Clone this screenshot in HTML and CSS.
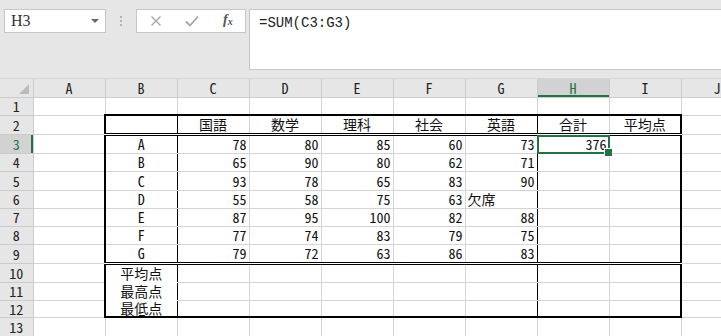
FILE: index.html
```html
<!DOCTYPE html>
<html lang="ja">
<head>
    <meta charset="UTF-8">
    <title>Sheet1</title>
    <link rel="stylesheet" href="styles.css">
</head>
<body>
    <div class="toolbar">
        <div class="namebox">
            <span class="ref">H3</span>
            <span class="caret"></span>
        </div>
        <div class="grip"><i></i><i></i><i></i></div>
        <div class="fxbox">
            <svg class="btn" width="12" height="12" viewBox="0 0 12 12">
                <path d="M1.5 1.5L10.5 10.5M10.5 1.5L1.5 10.5" stroke="#a6a6a6" stroke-width="1.4" fill="none"/>
            </svg>
            <svg class="btn" width="14" height="12" viewBox="0 0 14 12">
                <path d="M1 6.5L5 10.5L13 1.5" stroke="#a6a6a6" stroke-width="1.8" fill="none"/>
            </svg>
            <span class="fx">f<sub>x</sub></span>
        </div>
        <div class="formula">=SUM(C3:G3)</div>
    </div>

    <table class="sheet">
        <colgroup>
            <col class="rh">
            <col class="col"><col class="col"><col class="col"><col class="col"><col class="col">
            <col class="col"><col class="col"><col class="col"><col class="col"><col class="col">
        </colgroup>
        <tr class="colhead">
            <th class="corner"><span class="tri"></span></th>
            <th>A</th><th>B</th><th>C</th><th>D</th><th>E</th><th>F</th><th>G</th>
            <th class="selc">H</th><th>I</th><th>J</th>
        </tr>
        <tr class="h18">
            <th>1</th><td></td><td></td><td></td><td></td><td></td><td></td><td></td><td></td><td></td><td></td>
        </tr>
        <tr class="h19 r2">
            <th>2</th><td></td>
            <td class="t cb"></td>
            <td class="t c">国語</td><td class="t c">数学</td><td class="t c">理科</td><td class="t c">社会</td>
            <td class="t c cg">英語</td><td class="t c">合計</td><td class="t c ci">平均点</td>
            <td></td>
        </tr>
        <tr class="h19">
            <th class="selr">3</th><td></td>
            <td class="t c cb">A</td>
            <td class="t n">78</td><td class="t n">80</td><td class="t n">85</td><td class="t n">60</td>
            <td class="t n cg">73</td><td class="t n active">376</td><td class="t ci"></td>
            <td></td>
        </tr>
        <tr class="h18">
            <th>4</th><td></td>
            <td class="t c cb">B</td>
            <td class="t n">65</td><td class="t n">90</td><td class="t n">80</td><td class="t n">62</td>
            <td class="t n cg">71</td><td class="t"></td><td class="t ci"></td>
            <td></td>
        </tr>
        <tr class="h19">
            <th>5</th><td></td>
            <td class="t c cb">C</td>
            <td class="t n">93</td><td class="t n">78</td><td class="t n">65</td><td class="t n">83</td>
            <td class="t n cg">90</td><td class="t"></td><td class="t ci"></td>
            <td></td>
        </tr>
        <tr class="h18">
            <th>6</th><td></td>
            <td class="t c cb">D</td>
            <td class="t n">55</td><td class="t n">58</td><td class="t n">75</td><td class="t n">63</td>
            <td class="t cg">欠席</td><td class="t"></td><td class="t ci"></td>
            <td></td>
        </tr>
        <tr class="h18">
            <th>7</th><td></td>
            <td class="t c cb">E</td>
            <td class="t n">87</td><td class="t n">95</td><td class="t n">100</td><td class="t n">82</td>
            <td class="t n cg">88</td><td class="t"></td><td class="t ci"></td>
            <td></td>
        </tr>
        <tr class="h18">
            <th>8</th><td></td>
            <td class="t c cb">F</td>
            <td class="t n">77</td><td class="t n">74</td><td class="t n">83</td><td class="t n">79</td>
            <td class="t n cg">75</td><td class="t"></td><td class="t ci"></td>
            <td></td>
        </tr>
        <tr class="h19 r9">
            <th>9</th><td></td>
            <td class="t c cb">G</td>
            <td class="t n">79</td><td class="t n">72</td><td class="t n">63</td><td class="t n">86</td>
            <td class="t n cg">83</td><td class="t"></td><td class="t ci"></td>
            <td></td>
        </tr>
        <tr class="h19">
            <th>10</th><td></td>
            <td class="t c cb nob">平均点</td>
            <td class="t"></td><td class="t"></td><td class="t"></td><td class="t"></td>
            <td class="t cg"></td><td class="t"></td><td class="t ci"></td>
            <td></td>
        </tr>
        <tr class="h18">
            <th>11</th><td></td>
            <td class="t c cb nob">最高点</td>
            <td class="t"></td><td class="t"></td><td class="t"></td><td class="t"></td>
            <td class="t cg"></td><td class="t"></td><td class="t ci"></td>
            <td></td>
        </tr>
        <tr class="h17 r12">
            <th>12</th><td></td>
            <td class="t c cb">最低点</td>
            <td class="t"></td><td class="t"></td><td class="t"></td><td class="t"></td>
            <td class="t cg"></td><td class="t"></td><td class="t ci"></td>
            <td></td>
        </tr>
        <tr class="h19">
            <th>13</th><td></td><td></td><td></td><td></td><td></td><td></td><td></td><td></td><td></td><td></td>
        </tr>
    </table>
</body>
</html>
```

FILE: styles.css
```css
*{
    margin: 0;
    padding: 0;
    box-sizing: border-box;
}
html,body{
    width: 100%;
    height: 100%;
    overflow: hidden;
}
body{
    background-color: #e6e6e6;
    font-family: "Noto Sans Mono CJK JP", "Noto Sans CJK JP", monospace;
    font-size: 14px;
    color: #111;
}

/* formula bar */
.toolbar{
    display: flex;
    align-items: flex-start;
    height: 79px;
    padding: 9px 0 0 4px;
    border-bottom: 1px solid #d6d6d6;
}
.namebox{
    display: flex;
    align-items: center;
    justify-content: space-between;
    width: 102px;
    height: 24px;
    padding: 0 6px 0 6px;
    background-color: #fff;
    border: 1px solid #c6c6c6;
}
.namebox .ref{
    font-family: "Liberation Serif", serif;
    font-size: 16px;
    line-height: 18px;
    color: #333;
}
.namebox .caret{
    width: 0;
    height: 0;
    border-left: 4px solid transparent;
    border-right: 4px solid transparent;
    border-top: 4px solid #666;
}
.grip{
    display: flex;
    flex-direction: column;
    align-items: center;
    gap: 2px;
    width: 30px;
    padding-top: 7px;
}
.grip i{
    display: block;
    width: 2px;
    height: 2px;
    background-color: #b3b3b3;
}
.fxbox{
    display: flex;
    align-items: center;
    width: 110px;
    height: 24px;
    padding-left: 13px;
    background-color: #fff;
    border: 1px solid #c6c6c6;
}
.fxbox .btn{
    margin-right: 23px;
}
.fxbox .btn + .btn{
    margin-right: 24px;
}
.fx{
    font-family: "Liberation Serif", serif;
    font-style: italic;
    font-weight: bold;
    font-size: 14px;
    line-height: 16px;
    color: #555;
}
.fx sub{
    font-size: 10px;
    vertical-align: -1px;
}
.formula{
    flex: 1;
    height: 61px;
    margin-left: 3px;
    padding: 5px 9px;
    background-color: #fff;
    border: 1px solid #c6c6c6;
    border-right: none;
    font-family: "Liberation Mono", monospace;
    font-size: 14px;
    line-height: 16px;
    color: #222;
}

/* grid */
.sheet{
    table-layout: fixed;
    border-collapse: collapse;
    width: 753px;
    background-color: #fff;
}
.sheet .rh{
    width: 33px;
}
.sheet .col{
    width: 72px;
}
.sheet td{
    padding: 0 2px;
    border: 1px solid #d4d4d4;
    white-space: nowrap;
    overflow: visible;
    line-height: 14px;
}
.sheet th{
    font-weight: normal;
    background-color: #e6e6e6;
    border: 1px solid #cbcbcb;
    color: #222;
    line-height: 14px;
}
.colhead{
    height: 18px;
}
.colhead th{
    border-top: none;
}
.sheet tr > th:first-child{
    border-left: none;
}
.corner{
    position: relative;
}
.corner .tri{
    position: absolute;
    right: 4px;
    bottom: 3px;
    width: 0;
    height: 0;
    border-left: 10px solid transparent;
    border-bottom: 10px solid #bcbcbc;
}
.h17{ height: 17px; }
.h18{ height: 18px; }
.h19{ height: 19px; }

.c{ text-align: center; }
.n{ text-align: right; }

/* score table borders */
.r2 .t{
    border-top: 2px solid #000;
    border-bottom: 3px double #000;
}
.r9 .t{
    border-bottom: 3px double #000;
}
.r12 .t{
    border-bottom: 2px solid #000;
}
.sheet .t.cb{
    border-left: 2px solid #000;
    border-right: 1px solid #000;
}
.sheet .t.cg{
    border-right: 1px solid #000;
}
.sheet .t.ci{
    border-right: 2px solid #000;
}
.sheet .t.nob{
    border-bottom-color: #fff;
}

/* selection */
.sheet th.selc{
    background-color: #d2d2d2;
    color: #217346;
    box-shadow: inset 0 -2px #217346;
}
.sheet th.selr{
    background-color: #d2d2d2;
    color: #217346;
    box-shadow: inset -2px 0 #217346;
}
.active{
    position: relative;
}
.active::after{
    content: "";
    position: absolute;
    left: -1px;
    top: -1px;
    right: -1px;
    bottom: -1px;
    border: 2px solid #217346;
}
.active::before{
    content: "";
    position: absolute;
    right: -4px;
    bottom: -4px;
    width: 7px;
    height: 7px;
    background-color: #217346;
    border: 1px solid #fff;
    z-index: 2;
}
```
